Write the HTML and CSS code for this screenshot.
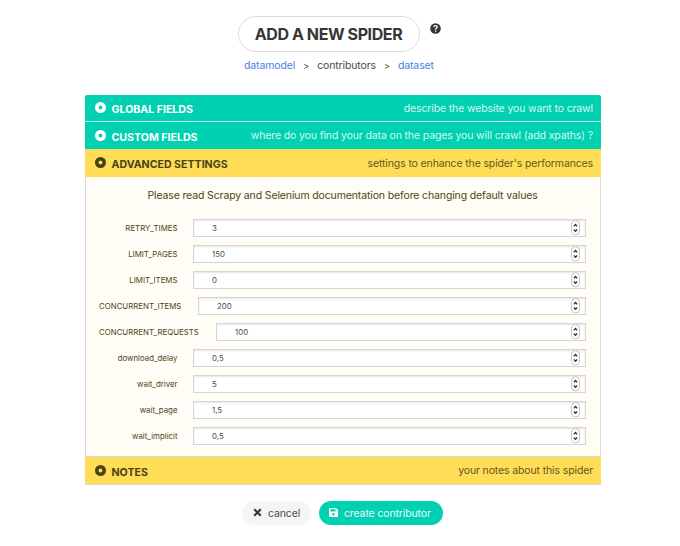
FILE: index.html
```html
<!DOCTYPE html>
<html lang="en">
<head>
<meta charset="utf-8">
<title>Add a new spider</title>
<link rel="stylesheet" href="styles.css">
</head>
<body>
<header class="top">
  <div class="title-row">
    <h1 class="title">ADD A NEW SPIDER</h1>
    <svg class="help" viewBox="0 0 11 11"><circle cx="5.5" cy="5.5" r="5.3" fill="#363636"/><path d="M3.7 4.1C4 2.2 7.3 2.3 7.2 4.1C7.1 5.2 5.6 5.2 5.6 6.4" fill="none" stroke="#fff" stroke-width="1.3"/><circle cx="5.6" cy="8.1" r=".8" fill="#fff"/></svg>
  </div>
  <nav class="crumbs"><a>datamodel</a><i>&gt;</i><span>contributors</span><i>&gt;</i><a>dataset</a></nav>
</header>
<main class="card">
  <section class="bar green first"><span class="dot"></span><b>GLOBAL FIELDS</b><span class="desc">describe the website you want to crawl</span></section>
  <section class="bar green second"><span class="dot"></span><b>CUSTOM FIELDS</b><span class="desc">where do you find your data on the pages you will crawl (add xpaths) ?</span></section>
  <section class="bar yellow"><span class="dot"></span><b>ADVANCED SETTINGS</b><span class="desc">settings to enhance the spider's performances</span></section>
  <div class="body">
    <p class="intro">Please read Scrapy and Selenium documentation before changing default values</p>
    <div class="row"><label>RETRY_TIMES</label><div class="field"><span>3</span><svg class="spin" viewBox="0 0 9 16"><use href="#spin"/></svg></div></div>
    <div class="row"><label>LIMIT_PAGES</label><div class="field"><span>150</span><svg class="spin" viewBox="0 0 9 16"><use href="#spin"/></svg></div></div>
    <div class="row"><label>LIMIT_ITEMS</label><div class="field"><span>0</span><svg class="spin" viewBox="0 0 9 16"><use href="#spin"/></svg></div></div>
    <div class="row items"><label>CONCURRENT_ITEMS</label><div class="field"><span>200</span><svg class="spin" viewBox="0 0 9 16"><use href="#spin"/></svg></div></div>
    <div class="row requests"><label>CONCURRENT_REQUESTS</label><div class="field"><span>100</span><svg class="spin" viewBox="0 0 9 16"><use href="#spin"/></svg></div></div>
    <div class="row lower"><label>download_delay</label><div class="field"><span>0,5</span><svg class="spin" viewBox="0 0 9 16"><use href="#spin"/></svg></div></div>
    <div class="row lower"><label>wait_driver</label><div class="field"><span>5</span><svg class="spin" viewBox="0 0 9 16"><use href="#spin"/></svg></div></div>
    <div class="row lower"><label>wait_page</label><div class="field"><span>1,5</span><svg class="spin" viewBox="0 0 9 16"><use href="#spin"/></svg></div></div>
    <div class="row lower"><label>wait_implicit</label><div class="field"><span>0,5</span><svg class="spin" viewBox="0 0 9 16"><use href="#spin"/></svg></div></div>
  </div>
  <section class="bar yellow notes"><span class="dot"></span><b>NOTES</b><span class="desc">your notes about this spider</span></section>
</main>
<footer class="actions">
  <a class="btn cancel"><svg viewBox="0 0 9 9"><path d="M1.2 1.2L7.8 7.8M7.8 1.2L1.2 7.8" stroke="#363636" stroke-width="2.2"/></svg><span>cancel</span></a>
  <a class="btn create"><svg viewBox="0 0 9 9"><path fill="#fff" fill-rule="evenodd" d="M.8 0H7L9 2V8.2Q9 9 8.2 9H.8Q0 9 0 8.2V.8Q0 0 .8 0ZM1.3 1.3V3.5H6.6V1.3ZM4.5 5A1.3 1.3 0 1 0 4.5 7.6A1.3 1.3 0 1 0 4.5 5Z"/></svg><span>create contributor</span></a>
</footer>
<svg class="defs"><defs><g id="spin"><rect x=".5" y=".5" width="8" height="14.5" rx="4" fill="#fff" stroke="#c4c4c4"/><path d="M2.9 6.2L4.5 4.6L6.1 6.2M2.9 9.6L4.5 11.2L6.1 9.6" fill="none" stroke="#333" stroke-width="1.4"/></g></defs></svg>
</body>
</html>
```
FILE: styles.css
```css
* { box-sizing: border-box; }
body { margin: 0; height: 546px; overflow: hidden; background: #fff; color: #4a4a4a; font: 10.5px/16px Inter, "Liberation Sans", sans-serif; letter-spacing: -.13px; }
svg { display: block; flex: none; }
.defs { width: 0; height: 0; }
.top { height: 95px; padding-top: 16px; }
.title-row { display: flex; gap: 10px; margin-left: 238px; }
.title { margin: 0; width: 182px; height: 36px; border: 1px solid #dbdbdb; border-radius: 18px; font-size: 16px; line-height: 35px; font-weight: 700; color: #363636; text-align: center; letter-spacing: -.4px; text-indent: -1px; white-space: nowrap; }
.help { width: 11px; height: 11px; margin-top: 7px; }
.crumbs { display: flex; margin: 6px 0 0 244px; white-space: nowrap; }
.crumbs a { color: #4a80e4; }
.crumbs i { font-style: normal; font-size: 9px; width: 22px; text-align: center; }
.card { width: 516px; margin-left: 85px; border-radius: 2px 2px 0 0; overflow: hidden; border-bottom: 1px solid #dbdbdb; }
.bar { display: flex; align-items: center; height: 27px; padding: 0 8px 0 10px; white-space: nowrap; }
.bar b { font-size: 10.6px; letter-spacing: 0; font-weight: 700; margin: 4px 0 0 5.5px; }
.desc { margin-left: auto; }
.dot { width: 11px; height: 11px; border-radius: 50%; background: radial-gradient(circle, transparent 1.6px, currentColor 2.3px); margin-top: -1px; }
.green { background: #00d1b2; color: #fff; }
.green .desc { color: #d6f8f2; }
.first { border-bottom: 1px solid #c5eee7; }
.first .desc { margin-top: 1px; }
.yellow { background: #ffdd57; color: #4a4216; height: 28px; }
.yellow .desc { color: #655819; margin-top: 2px; }
.body { height: 280px; background: #fffdf5; border: 1px solid #dbdbdb; border-top: 0; padding: 11px 14px 0 13px; color: #4d4420; }
.intro { margin: 0 0 15px; text-align: center; }
.row { display: flex; height: 18px; margin-bottom: 8px; font-size: 7.85px; letter-spacing: 0; line-height: 18px; }
.row label { width: 78.5px; margin-right: 15.5px; text-align: right; white-space: nowrap; }
.row.items label { width: 83.5px; text-align: left; }
.row.requests label { width: 101.5px; text-align: left; }
.field { flex: 1; display: flex; justify-content: space-between; height: 18px; padding: 0 5px 0 18px; background: #fff; border: 1px solid #d5d5d5; box-shadow: inset 0 1px 2px rgba(10,10,10,.1); line-height: 17px; color: #4a4a4a; }
.spin { width: 9px; height: 16px; }
.notes { height: 27px; }
.notes .desc { margin-top: 0; }
.actions { display: flex; gap: 8px; margin: 16px 0 0 242px; }
.btn { display: flex; align-items: center; height: 24px; border-radius: 12px; white-space: nowrap; }
.btn svg { width: 9px; height: 9px; margin-top: -1px; }
.btn span { margin-top: 2px; }
.cancel { width: 69px; padding-left: 11px; gap: 6px; background: #f5f5f5; color: #4a4a4a; }
.create { width: 124px; padding-left: 10px; gap: 6px; background: #00d1b2; color: #e8fbf8; }
```
